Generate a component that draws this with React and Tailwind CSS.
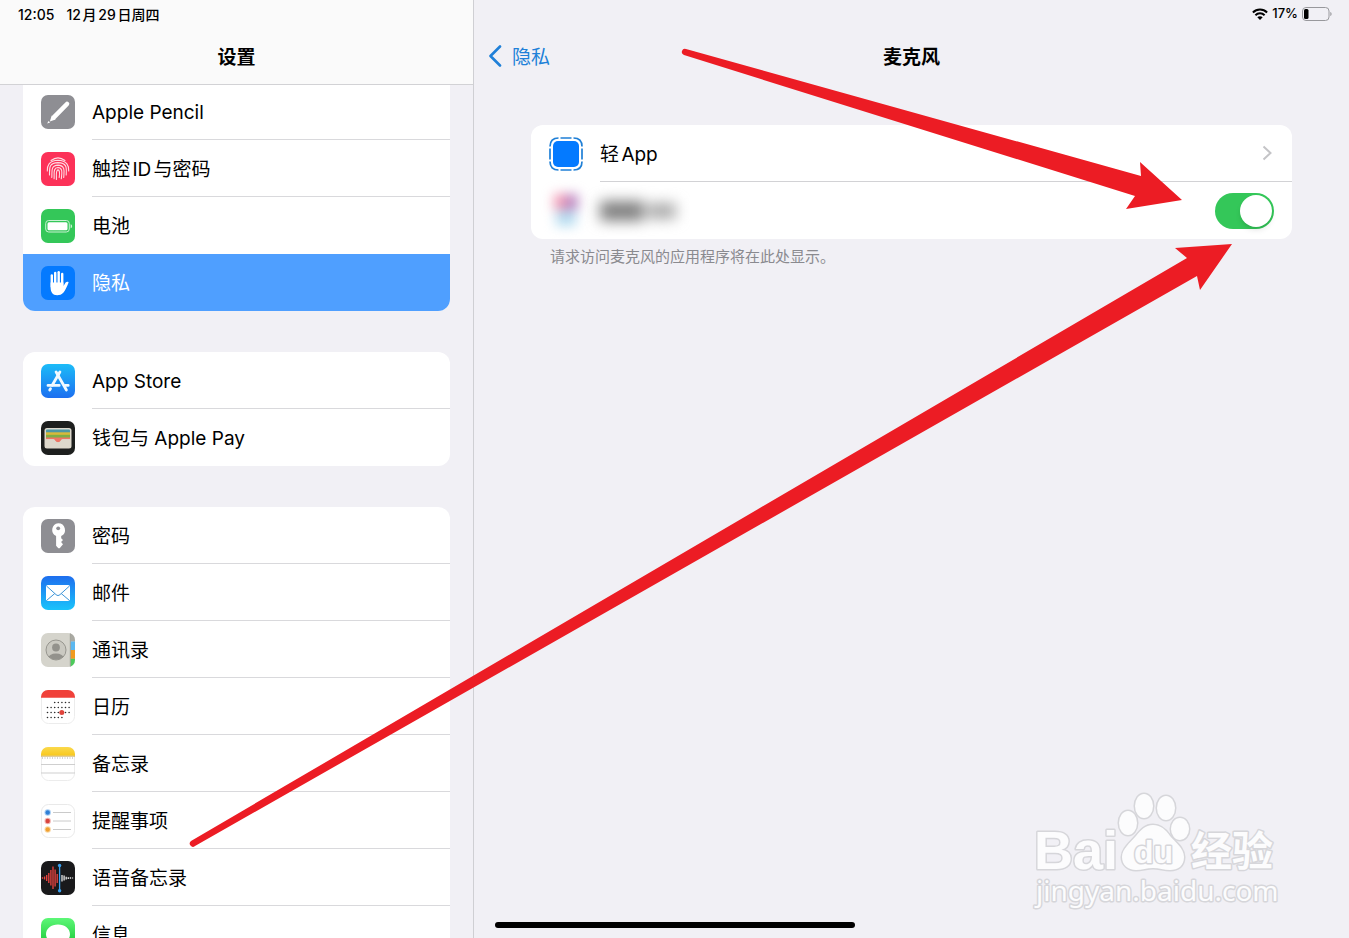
import { useState } from "react";

function PencilIcon() {
  return (
    <svg viewBox="0 0 34 34" className="size-[34px]">
      <rect width="34" height="34" rx="7" fill="#8e8e93" />
      <path d="M12.800 22.400 26 9" stroke="#fff" strokeWidth="4.600" strokeLinecap="round" />
      <path d="M10.800 20.600 14.600 24.400 8.800 26.400z" fill="#fff" />
      <path d="M6.200 28.600 7.500 25.900l1.600 1.600z" fill="#fff" />
    </svg>
  );
}

function TouchIdIcon() {
  return (
    <svg viewBox="0 0 34 34" className="size-[34px]">
      <rect width="34" height="34" rx="7" fill="#fc3158" />
      <g fill="none" stroke="#ffdbe2" strokeWidth="1.100" strokeLinecap="round">
        <path d="M10 8.500c4.300-3.300 9.700-3.300 14 0" />
        <path d="M6.300 19c-.3-5 1.500-10.500 10.700-10.800 9.200.3 11 5.800 10.700 10.800" />
        <path d="M8.500 23c.2-6-1.500-12 8.500-12.400 10 .4 8.300 6.400 8.200 12.400" />
        <path d="M10.800 25.500c.5-5-1.800-12 6.200-12.400 8 .4 6 7.400 5.700 12.400" />
        <path d="M13.100 26.800c.4-5-1.400-10.900 3.900-11.300 5.300.4 3.800 6.300 3.300 11.300" />
        <path d="M15.400 27.500c.2-4-.9-9.200 1.600-9.600 2.500.4 1.400 5.600 1.200 7.600" />
      </g>
    </svg>
  );
}

function BatteryIcon() {
  return (
    <svg viewBox="0 0 34 34" className="size-[34px]">
      <rect width="34" height="34" rx="7" fill="#34c759" />
      <rect x="4.700" y="11.500" width="23.600" height="11.500" rx="3" fill="none" stroke="#c9f2d3" />
      <rect x="6.500" y="13.300" width="20" height="8" rx="1.500" fill="#fff" />
      <path d="M29.600 15.300c2 .6 2 3.400 0 4z" fill="#c9f2d3" />
    </svg>
  );
}

function HandIcon() {
  return (
    <svg viewBox="0 0 34 34" className="size-[34px]">
      <rect width="34" height="34" rx="7" fill="#047aff" />
      <g stroke="#fff" strokeWidth="2.400" strokeLinecap="round">
        <path d="M10.800 9.500v11" />
        <path d="M14.200 7v12" />
        <path d="M17.700 6.300v12" />
        <path d="M21.200 8v12" />
      </g>
      <path
        d="M9.600 16.500h12.800v3.700l2.200-3.600c.8-1.200 3.400-1.200 2.900.2-1.500 3.700-3 7.200-5 9.700-1.800 2.200-4 2.700-6.300 2.700-4.700 0-6.600-3.300-6.600-8z"
        fill="#fff"
      />
    </svg>
  );
}

function AppStoreIcon() {
  return (
    <svg viewBox="0 0 34 34" className="size-[34px]">
      <defs>
        <linearGradient id="store" x1="0" y1="0" x2="0" y2="1">
          <stop offset="0" stopColor="#1cbcf8" />
          <stop offset="1" stopColor="#1d6ff0" />
        </linearGradient>
      </defs>
      <rect width="34" height="34" rx="7" fill="url(#store)" />
      <g stroke="#f2f9ff" strokeWidth="2.800" strokeLinecap="round" fill="none">
        <path d="M18.900 8 11.200 21.300" />
        <path d="M15.100 8 25.400 26" />
        <path d="M7 21.400h11.200M24.500 21.400h2.700" />
        <path d="M9.500 24.800l-.8 1.300" />
      </g>
    </svg>
  );
}

function WalletIcon() {
  return (
    <svg viewBox="0 0 34 34" className="size-[34px]">
      <rect width="34" height="34" rx="7" fill="#1d1f1e" />
      <rect x="3.500" y="7" width="27" height="20.500" rx="2.500" fill="#ddd8cc" />
      <rect x="5" y="8.500" width="24" height="4" rx="1" fill="#4d97a5" />
      <rect x="5" y="11.300" width="24" height="3" fill="#d8b93a" />
      <rect x="5" y="13.800" width="24" height="3.500" fill="#7fae45" />
      <path d="M5 16.600h24v1.700h-7.500c-1 0-1.400.8-2 1.600-1.300 1.800-3.700 1.800-5 0-.6-.8-1-1.600-2-1.600H5z" fill="#ee7565" />
      <path d="M4.300 18.200h7.900c1 0 1.400.9 2 1.700 1.400 1.900 4.200 1.900 5.600 0 .6-.8 1-1.700 2-1.700h7.900v7.300c0 1-.6 1.500-1.500 1.500H6c-1 0-1.700-.5-1.700-1.500z" fill="#ddd8cc" />
    </svg>
  );
}

function KeyIcon() {
  return (
    <svg viewBox="0 0 34 34" className="size-[34px]">
      <rect width="34" height="34" rx="7" fill="#8e8e93" />
      <path
        d="M17.200 4.200a6.800 6.800 0 0 1 3 12.900v2.100l1.800 1.900-1.900 2 1.900 2.100-2.900 3.500c-.6.700-1.600.7-2.200 0l-1.800-1.900v-9.700A6.800 6.800 0 0 1 17.200 4.200z"
        fill="#fff"
      />
      <circle cx="17.200" cy="9.300" r="1.900" fill="#8e8e93" />
    </svg>
  );
}

function MailIcon() {
  return (
    <svg viewBox="0 0 34 34" className="size-[34px]">
      <defs>
        <linearGradient id="mail" x1="0" y1="0" x2="0" y2="1">
          <stop offset="0" stopColor="#1e6eee" />
          <stop offset="1" stopColor="#1ac3fb" />
        </linearGradient>
      </defs>
      <rect width="34" height="34" rx="7" fill="url(#mail)" />
      <rect x="5" y="9" width="24" height="16" rx="1.800" fill="#fff" />
      <path
        d="M5.500 10l9.500 8.600c1.300 1.200 2.700 1.200 4 0L28.500 10M5.500 24.500l8.300-7M28.500 24.500l-8.300-7"
        fill="none"
        stroke="#3d95d8"
        strokeWidth="1"
      />
    </svg>
  );
}

function ContactsIcon() {
  return (
    <svg viewBox="0 0 34 34" className="size-[34px]">
      <defs>
        <clipPath id="contacts">
          <rect width="34" height="34" rx="7" />
        </clipPath>
        <clipPath id="face">
          <circle cx="15" cy="17" r="9.800" />
        </clipPath>
      </defs>
      <g clipPath="url(#contacts)">
        <rect width="34" height="34" fill="#d5d4cc" />
        <rect x="29.500" width="5" height="8.500" fill="#a9a9a2" />
        <rect x="29.500" y="8.500" width="5" height="8.500" fill="#5cb8f0" />
        <rect x="29.500" y="17" width="5" height="8.800" fill="#f09a1f" />
        <rect x="29.500" y="25.800" width="5" height="8.500" fill="#4ccb5b" />
        <path d="M29.300 0v34" stroke="#97968e" strokeWidth=".8" />
      </g>
      <circle cx="15" cy="17" r="10" fill="#cac9c1" stroke="#97968f" strokeWidth="1" />
      <g clipPath="url(#face)" fill="#93928c">
        <circle cx="15" cy="14.500" r="3.900" />
        <ellipse cx="15" cy="25.500" rx="8" ry="5" />
      </g>
    </svg>
  );
}

function CalendarIcon() {
  const rows = [
    { y: 12.5, from: 2 },
    { y: 17.5, from: 0 },
    { y: 22.5, from: 0 },
    { y: 27.5, from: 0, to: 5 },
  ];
  return (
    <svg viewBox="0 0 34 34" className="size-[34px]">
      <rect x=".5" y=".5" width="33" height="33" rx="7" fill="#fff" stroke="#ececec" />
      <path d="M0 7.800V7a7 7 0 0 1 7-7h20a7 7 0 0 1 7 7v.8z" fill="#f0413a" />
      {rows.map((row) =>
        [0, 1, 2, 3, 4, 5, 6]
          .filter((c) => c >= row.from && c < (row.to || 7))
          .map((c) => (
            <circle key={`${row.y}-${c}`} cx={6.5 + c * 3.6} cy={row.y} r=".8" fill="#2b2b2b" />
          ))
      )}
      <circle cx="20.800" cy="22.500" r="2.500" fill="#e0443c" />
    </svg>
  );
}

function NotesIcon() {
  return (
    <svg viewBox="0 0 34 34" className="size-[34px]">
      <defs>
        <linearGradient id="notes" x1="0" y1="0" x2="0" y2="1">
          <stop offset="0" stopColor="#fbd94c" />
          <stop offset="1" stopColor="#f8c81c" />
        </linearGradient>
      </defs>
      <rect x=".5" y=".5" width="33" height="33" rx="7" fill="#fff" stroke="#ececec" />
      <path d="M0 8.800V7a7 7 0 0 1 7-7h20a7 7 0 0 1 7 7v1.800z" fill="url(#notes)" />
      <path d="M0 9.200h34" stroke="#c9a544" strokeWidth=".8" />
      <path d="M1 11h32" stroke="#aaa" strokeWidth="1" strokeDasharray="1 1.500" />
      <path d="M0 17.500h34M0 26h34" stroke="#c9c9c9" strokeWidth=".9" />
    </svg>
  );
}

function RemindersIcon() {
  const dots = [
    { y: 8.5, color: "#2f7fd6", ring: "#a7cdf3" },
    { y: 17, color: "#d8433c", ring: "#f2b4b1" },
    { y: 25.5, color: "#f0a030", ring: "#f9d9a8" },
  ];
  return (
    <svg viewBox="0 0 34 34" className="size-[34px]">
      <rect x=".5" y=".5" width="33" height="33" rx="7" fill="#fff" stroke="#e9e9e9" />
      {dots.map((dot) => (
        <g key={dot.y}>
          <circle cx="6.700" cy={dot.y} r="3.200" fill={dot.ring} />
          <circle cx="6.700" cy={dot.y} r="2.200" fill={dot.color} />
          <path d={`M12 ${dot.y}h18`} stroke="#c4c4c4" strokeWidth=".9" />
        </g>
      ))}
    </svg>
  );
}

function VoiceMemosIcon() {
  return (
    <svg viewBox="0 0 34 34" className="size-[34px]">
      <rect width="34" height="34" rx="7" fill="#19191b" />
      <g stroke="#ee4440" strokeWidth="1.300">
        <path d="M1.500 16.200v1.600M3.600 15.500v3M5.700 14v6M7.800 12v10M9.900 9v15.500M12 5.500v22.500M14.100 8.500v17M16.200 13v9" />
      </g>
      <g stroke="#e8e8e8" strokeWidth="1.300">
        <path d="M21 14v6.500M23.100 14.500v5M25.200 15.700v2.800M27.300 16.200v1.800M29.400 16.200v1.600M31.500 16.400v1.200" />
      </g>
      <path d="M18.600 4.500v25" stroke="#3aa0ee" strokeWidth="1.300" />
      <circle cx="18.600" cy="4.500" r="1.700" fill="#3aa0ee" />
      <circle cx="18.600" cy="29.700" r="1.700" fill="#3aa0ee" />
    </svg>
  );
}

function MessagesIcon() {
  return (
    <svg viewBox="0 0 34 34" className="size-[34px]">
      <defs>
        <linearGradient id="messages" x1="0" y1="0" x2="0" y2="1">
          <stop offset="0" stopColor="#5df777" />
          <stop offset="1" stopColor="#0abc28" />
        </linearGradient>
      </defs>
      <rect width="34" height="34" rx="7" fill="url(#messages)" />
      <path
        d="M17 6.500c6.900 0 12 4.200 12 9.700s-5.100 9.700-12 9.700c-1 0-2.100-.1-3-.3-1.500 1.400-3.400 2-5.500 2 1-1 1.500-2.200 1.500-3.500-3-1.700-5-4.600-5-7.900 0-5.500 5.100-9.700 12-9.700z"
        fill="#fff"
      />
    </svg>
  );
}

function AppClipIcon() {
  return (
    <svg viewBox="0 0 34 34" className="size-[34px]">
      <rect x="4" y="4" width="26" height="26" rx="5" fill="#047aff" />
      <g fill="none" stroke="#1f7fd6" strokeWidth="1.700">
        <path d="M11.500 1h11M11.500 33h11M1 11.500v11M33 11.500v11" />
        <path d="M1 9.500C1 4 4 1 9.500 1M24.500 1C30 1 33 4 33 9.500M33 24.500C33 30 30 33 24.500 33M9.500 33C4 33 1 30 1 24.500" />
      </g>
    </svg>
  );
}

const groups = [
  [
    { label: "Apple Pencil", icon: <PencilIcon /> },
    { label: "触控ID与密码", icon: <TouchIdIcon /> },
    { label: "电池", icon: <BatteryIcon /> },
    { label: "隐私", icon: <HandIcon /> },
  ],
  [
    { label: "App Store", icon: <AppStoreIcon /> },
    { label: "钱包与 Apple Pay", icon: <WalletIcon /> },
  ],
  [
    { label: "密码", icon: <KeyIcon /> },
    { label: "邮件", icon: <MailIcon /> },
    { label: "通讯录", icon: <ContactsIcon /> },
    { label: "日历", icon: <CalendarIcon /> },
    { label: "备忘录", icon: <NotesIcon /> },
    { label: "提醒事项", icon: <RemindersIcon /> },
    { label: "语音备忘录", icon: <VoiceMemosIcon /> },
    { label: "信息", icon: <MessagesIcon /> },
  ],
];

function Sidebar() {
  const [selected, setSelected] = useState("隐私");

  return (
    <aside className="flex w-[474px] shrink-0 flex-col border-r border-[#cfcfd3]">
      <header className="z-10 shrink-0 border-b border-[#d2d2d5] bg-[#fafafa]">
        <div className="flex h-7 items-center gap-3 pl-[18px] text-[14px] font-medium">
          <span>12:05</span>
          <span>12月29日周四</span>
        </div>
        <h1 className="flex h-14 items-center justify-center pt-1 text-[19px] font-semibold">
          设置
        </h1>
      </header>

      <nav className="-mt-0.5 flex min-h-0 flex-1 flex-col gap-[41px] overflow-hidden px-[23px]">
        {groups.map((items, index) => (
          <ul
            key={index}
            className={`shrink-0 overflow-hidden bg-white ${
              index === 0 ? "rounded-b-xl" : "rounded-xl"
            }`}
          >
            {items.map((item, i) => {
              const active = item.label === selected;
              const last = i === items.length - 1;
              const beforeActive = !last && items[i + 1].label === selected;
              return (
                <li key={item.label}>
                  <button
                    type="button"
                    onClick={() => setSelected(item.label)}
                    className={`flex h-[57px] w-full items-center gap-[17px] pl-[18px] text-left text-[19px] ${
                      active ? "bg-[#4f9fff] text-white" : ""
                    }`}
                  >
                    {item.icon}
                    <span
                      className={`flex h-full flex-1 items-center pt-1 ${
                        last || active || beforeActive ? "" : "border-b border-[#d9d9dc]"
                      }`}
                    >
                      {item.label}
                    </span>
                  </button>
                </li>
              );
            })}
          </ul>
        ))}
      </nav>
    </aside>
  );
}

function StatusIcons() {
  return (
    <div className="flex h-7 items-center justify-end gap-1 pr-[17px] text-[13px] font-medium">
      <svg viewBox="0 0 16 12" className="h-3 w-4">
        <g fill="none" stroke="#000" strokeWidth="2">
          <path d="M.9 4.500c4-4 10.200-4 14.200 0" />
          <path d="M3.400 7.200c2.600-2.600 6.600-2.600 9.200 0" />
        </g>
        <path d="M5.300 9.300c1.500-1.500 3.900-1.500 5.400 0L8 12z" fill="#000" />
      </svg>
      <span>17%</span>
      <svg viewBox="0 0 30 14" className="h-3.5 w-[30px]">
        <rect x=".5" y=".5" width="26.500" height="13" rx="3.500" fill="none" stroke="#98989c" />
        <rect x="2" y="2" width="4.500" height="10" rx="1.500" fill="#000" />
        <path d="M28.300 5c1.700.5 1.700 3.500 0 4z" fill="#98989c" />
      </svg>
    </div>
  );
}

function MicrophonePanel() {
  const [enabled, setEnabled] = useState(true);

  return (
    <main className="flex min-w-0 flex-1 flex-col">
      <StatusIcons />
      <header className="grid h-14 grid-cols-3 items-center px-[14px] text-[19px]">
        <a href="#privacy" className="flex items-center gap-2.5 text-[#2080d8]">
          <svg viewBox="0 0 14 22" className="h-[22px] w-3.5">
            <path
              d="M12 1.500 2.500 11l9.500 9.500"
              fill="none"
              stroke="#2080d8"
              strokeWidth="2.600"
              strokeLinecap="round"
              strokeLinejoin="round"
            />
          </svg>
          <span className="pt-1">隐私</span>
        </a>
        <h2 className="pt-1 text-center font-semibold">麦克风</h2>
      </header>

      <section className="mx-[57px] mt-[41px]">
        <div className="overflow-hidden rounded-xl bg-white">
          <button
            type="button"
            className="flex h-[57px] w-full items-center gap-[17px] pl-[18px] text-left text-[19px]"
          >
            <AppClipIcon />
            <span className="flex h-full flex-1 items-center justify-between border-b border-[#d2d2d5] pr-5">
              <span className="pt-1 [text-autospace:normal]">轻App</span>
              <svg viewBox="0 0 10 16" className="h-4 w-2.5">
                <path d="M1.500 1.500 8.500 8l-7 6.500" fill="none" stroke="#c4c4c7" strokeWidth="2" />
              </svg>
            </span>
          </button>
          <div className="flex h-[57px] items-center gap-[17px] px-[18px]">
            <div className="flex size-[34px] flex-col items-center blur-[6px]">
              <div className="flex h-4 w-6">
                <div className="flex-1 bg-[#f29ab4]" />
                <div className="flex-1 bg-[#bb86c2]" />
              </div>
              <div className="h-4 w-5 bg-[#b5dcf0]" />
            </div>
            <div className="flex items-center gap-1 blur-[7px]">
              <div className="h-5 w-11 bg-[#808080]" />
              <div className="h-4 w-7 bg-[#aaa]" />
            </div>
            <input
              type="checkbox"
              role="switch"
              aria-label="麦克风"
              checked={enabled}
              onChange={(e) => setEnabled(e.target.checked)}
              className="ml-auto h-9 w-[59px] cursor-pointer appearance-none rounded-full bg-[#e5e5ea] p-0.5 before:block before:size-8 before:rounded-full before:bg-white before:shadow-md checked:bg-[#34c759] checked:before:ml-[23px]"
            />
          </div>
        </div>
        <p className="mt-2 pl-[19px] text-[15px] leading-5 text-[#8a8a8f]">
          请求访问麦克风的应用程序将在此处显示。
        </p>
      </section>
    </main>
  );
}

function Arrows() {
  return (
    <svg
      viewBox="0 0 1349 938"
      preserveAspectRatio="none"
      className="pointer-events-none absolute inset-0 z-20 size-full"
    >
      <g fill="#ec1c24">
        <path d="M686 49 1141 176 1140 162 1182 200 1126 209 1135 196 684 55a3 3 0 0 1 2-6z" />
        <path d="M191 841 1187 258 1175 248 1232 244 1200 290 1197 276 195 846a3 3 0 0 1-4-5z" />
      </g>
    </svg>
  );
}

function Watermark() {
  return (
    <svg
      viewBox="0 0 250 124"
      className="pointer-events-none absolute right-[67px] bottom-[24px] h-[124px] w-[250px]"
    >
      <g fill="#fcfcfd" stroke="#d6d6da" strokeWidth="3" paintOrder="stroke" strokeLinejoin="round">
        <text x="2" y="79" className="font-['Liberation_Sans',sans-serif] text-[54px] font-bold">
          Bai
        </text>
        <ellipse cx="96" cy="33" rx="9" ry="12" />
        <ellipse cx="112" cy="16" rx="9" ry="12" />
        <ellipse cx="134" cy="18" rx="9" ry="12" />
        <ellipse cx="148" cy="39" rx="9" ry="11" />
        <path d="M121 35c8 0 13 5 17 11 5 6 14 12 14 21s-6 13-14 13c-6 0-11-2-17-2s-11 2-17 2c-8 0-14-5-14-13s8-14 14-21c5-6 9-11 17-11z" />
        <text x="102" y="73" className="font-['Liberation_Sans',sans-serif] text-[32px] font-bold">
          du
        </text>
        <text x="159" y="76" className="font-['Noto_Sans_CJK_SC',sans-serif] text-[41px] font-bold">
          经验
        </text>
        <text x="4" y="111" className="font-['Noto_Sans',sans-serif] text-[28px]">
          jingyan.baidu.com
        </text>
      </g>
    </svg>
  );
}

export default function App() {
  return (
    <div
      lang="zh-CN"
      className="relative flex h-screen overflow-hidden bg-[#f1f0f5] font-['Inter','Noto_Sans_CJK_SC',sans-serif] text-black [text-autospace:normal]"
    >
      <Sidebar />
      <MicrophonePanel />
      <Watermark />
      <Arrows />
      <div className="absolute bottom-2.5 left-1/2 h-1.5 w-[360px] -translate-x-1/2 rounded-full bg-black" />
    </div>
  );
}
